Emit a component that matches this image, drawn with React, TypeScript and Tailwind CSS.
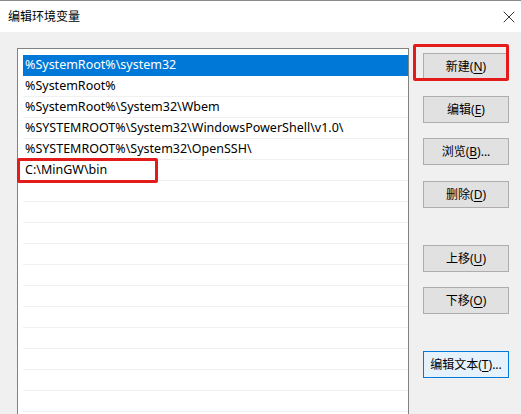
import { X } from "lucide-react";

const paths = [
	"%SystemRoot%\\system32",
	"%SystemRoot%",
	"%SystemRoot%\\System32\\Wbem",
	"%SYSTEMROOT%\\System32\\WindowsPowerShell\\v1.0\\",
	"%SYSTEMROOT%\\System32\\OpenSSH\\",
	"C:\\MinGW\\bin",
];

function Btn({
	label,
	keyName,
	tail = "",
	className = "",
	focused = false,
	children,
}: {
	label: string;
	keyName: string;
	tail?: string;
	className?: string;
	focused?: boolean;
	children?: React.ReactNode;
}) {
	return (
		<div
			className={`relative flex h-[27px] w-[86px] items-center justify-center border text-[12px] text-black ${
				focused ? "border-[#0078d7] bg-[#e5f1fb]" : "border-[#adadad] bg-[#e1e1e1]"
			} ${className}`}
		>
			<span>
				{label}(<span className="underline underline-offset-2">{keyName}</span>){tail}
			</span>
			{children}
		</div>
	);
}

export default function App() {
	return (
		<div
			className="flex h-[414px] w-[521px] flex-col overflow-hidden bg-[#f0f0f0]"
			style={{ fontFamily: '"Noto Sans", "Noto Sans CJK SC", sans-serif' }}
		>
			{/* Title bar */}
			<div className="flex h-[32px] shrink-0 items-center justify-between border-t border-[#8a8a8a] bg-white pl-[8px] pr-[2px]">
				<span className="text-[12px] text-black">编辑环境变量</span>
				<X className="h-[20px] w-[20px] text-[#222]" strokeWidth={1.1} />
			</div>

			<div className="flex flex-1">
				{/* Path list */}
				<div className="ml-[17px] mt-[16px] flex w-[392px] flex-col border border-b-0 border-[#828282] bg-white pl-[5px] pt-[6px]">
					{paths.map((p, i) => (
						<div
							key={p}
							className={`relative flex h-[21px] shrink-0 items-center border-b pl-[2px] text-[12.5px] ${
								i === 0
									? "border-[#0078d7] bg-[#0078d7] text-white"
									: "border-[#f0f0f0] text-black"
							}`}
						>
							{p}
							{i === 5 && (
								<div className="absolute -left-[6px] -top-[2px] h-[25px] w-[141px] rounded-[2px] border-[3px] border-[#e31b1b]" />
							)}
						</div>
					))}
					{Array.from({ length: 12 }).map((_, i) => (
						<div key={i} className="h-[21px] shrink-0 border-b border-[#f0f0f0]" />
					))}
				</div>

				{/* Buttons */}
				<div className="ml-[14px] flex flex-col pt-[21px]">
					<Btn label="新建" keyName="N">
						<div className="absolute -left-[11px] -top-[10px] h-[37px] w-[96px] rounded-[2px] border-[3px] border-[#e31b1b]" />
					</Btn>
					<Btn label="编辑" keyName="E" className="mt-[16px]" />
					<Btn label="浏览" keyName="B" tail="..." className="mt-[15px]" />
					<Btn label="删除" keyName="D" className="mt-[16px]" />
					<Btn label="上移" keyName="U" className="mt-[37px]" />
					<Btn label="下移" keyName="O" className="mt-[15px]" />
					<Btn label="编辑文本" keyName="T" tail="..." focused className="mt-[37px]" />
				</div>
			</div>
		</div>
	);
}
